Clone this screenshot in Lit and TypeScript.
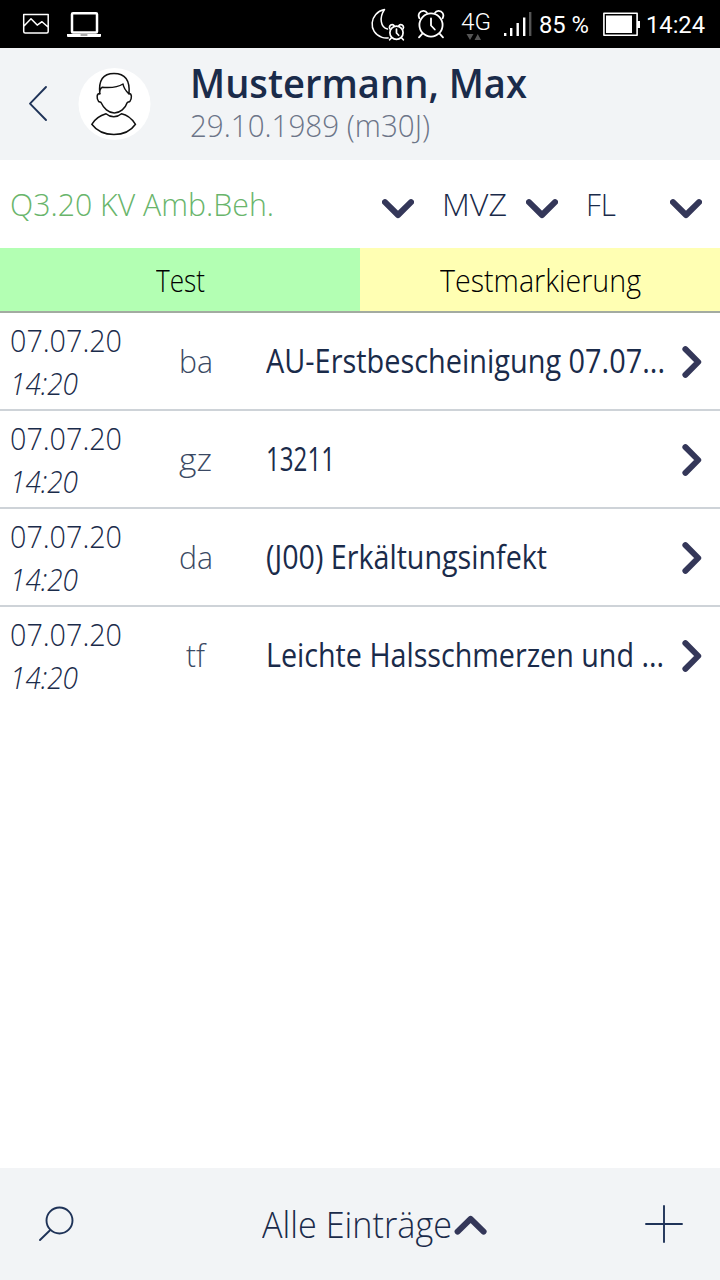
import { LitElement, html, css, svg } from "lit";
import { customElement, property } from "lit/decorators.js";

/** A single line of text condensed or widened to fill a given width. */
@customElement("fit-text")
class FitText extends LitElement {
  @property({ type: Number }) width = 0;
  static styles = css`
    :host { display: block; flex: none; white-space: pre; }
    .line { display: inline-block; transform-origin: 0 50%; }
  `;
  render() {
    return html`<span class="line"><slot></slot></span>`;
  }
  async firstUpdated() {
    this.style.width = `${this.width}px`;
    const line = this.renderRoot.querySelector(".line") as HTMLElement;
    const natural = line.getBoundingClientRect().width;
    if (natural) line.style.transform = `scaleX(${this.width / natural})`;
  }
}

interface Entry {
  date: string;
  time: string;
  kind: string;
  kindWidth: number;
  text: string;
  textWidth: number;
}

const entries: Entry[] = [
  { date: "07.07.20", time: "14:20", kind: "ba", kindWidth: 34, text: "AU-Erstbescheinigung 07.07...", textWidth: 399 },
  { date: "07.07.20", time: "14:20", kind: "gz", kindWidth: 33, text: "13211", textWidth: 69 },
  { date: "07.07.20", time: "14:20", kind: "da", kindWidth: 34, text: "(J00) Erkältungsinfekt", textWidth: 281 },
  { date: "07.07.20", time: "14:20", kind: "tf", kindWidth: 19, text: "Leichte Halsschmerzen und ...", textWidth: 398 },
];

const chevronDown = html`<svg class="chev" width="32" height="20" viewBox="0 0 32 20"><path d="M3 3.2 16 16 29 3.2" /></svg>`;
const chevronUp = html`<svg class="chev" width="34" height="20" viewBox="0 0 34 20"><path d="M3.6 16.6 16.6 3.8 29.6 16.6" /></svg>`;
const chevronRight = html`<svg class="chev" width="20" height="32" viewBox="0 0 20 32"><path d="M3.4 3.2 16.2 16 3.4 28.8" /></svg>`;

const clock = svg`
  <circle cx="14" cy="16" r="11.6" />
  <path d="M14 9.5v7l3.8 4M5.2 24.8 2 28.4M22.8 24.8 26 28.4" />
  <path d="M2.4 9.2C.4 5.8 2.8 1.6 6.6 1.8 8.2 1.9 9.4 2.6 10 3.8M25.6 9.2C27.6 5.8 25.2 1.6 21.4 1.8 19.8 1.9 18.6 2.6 18 3.8" />`;

@customElement("app-root")
class AppRoot extends LitElement {
  static styles = css`
    :host {
      display: flex; flex-direction: column; width: 720px; height: 1280px;
      box-sizing: border-box; overflow: hidden; background: #fff; color: #1a2b4a;
      font-family: "Open Sans", "Noto Sans", sans-serif; font-size: 32px; font-weight: 300; line-height: 43px;
    }
    svg { display: block; flex: none; fill: none; stroke-linecap: round; stroke-linejoin: round; }
    .chev { stroke: #343759; stroke-width: 6; }
    .status {
      flex: none; height: 48px; display: flex; align-items: center; background: #000; color: #fff;
      font-family: Roboto, sans-serif; font-size: 24.5px; font-weight: 400; line-height: 48px;
    }
    .status svg { stroke: #fff; }
    .picture { margin-left: 22px; }
    .laptop { margin-left: 17px; }
    .right { margin-left: auto; display: flex; align-items: center; width: 350px; }
    .alarm { margin-left: 11px; }
    .network { width: 30px; margin-left: 16px; display: flex; flex-direction: column; padding-top: 12px; height: 36px; }
    .network fit-text { font-size: 23px; line-height: 22px; font-weight: 350; }
    .signal { margin-left: 13px; }
    .percent { margin-left: 7px; padding-top: 1px; }
    .battery { margin-left: 14px; }
    .time { margin-left: 6px; padding-top: 1px; }
    .header { flex: none; height: 112px; display: flex; background: #f2f4f6; }
    .back { margin: 37px 0 0 27px; }
    .avatar { margin: 19px 0 0 29px; }
    .person { margin: 12px 0 0 38px; }
    .name { font-size: 40px; font-weight: 600; line-height: 45px; }
    .born { color: #6c7588; line-height: 40px; }
    .filters { flex: none; height: 88px; display: grid; grid-template-columns: 432px 144px 144px; align-items: center; }
    .filter { display: flex; align-items: center; justify-content: space-between; padding: 0 18px 1px 10px; }
    .filter .chev { margin-top: 10px; }
    .quarter { color: #69b56b; }
    .tabs { flex: none; height: 63px; display: grid; grid-template-columns: 1fr 1fr; border-bottom: 2px solid #a3aba1; color: #000; background: linear-gradient(90deg, #b3ffb3 50%, #ffffb3 50%); }
    .tab { display: flex; align-items: center; justify-content: center; }
    .list { flex: 1; }
    .entry { height: 96px; display: grid; grid-template-columns: 132px 129px 420px 39px; align-items: center; border-bottom: 2px solid #ced3d8; }
    .entry:last-child { border-bottom: none; }
    .entry .chev { margin-left: 1px; margin-top: 1px; }
    .when { padding-left: 10px; }
    .clock { font-style: italic; }
    .kind { display: flex; justify-content: center; color: #3a4963; padding: 0 2px 1px 0; }
    .text { padding: 0 0 2px 5px; font-size: 33px; font-weight: 500; }
    .footer { flex: none; height: 112px; display: flex; align-items: center; background: #f2f4f6; font-size: 36px; }
    .search { margin-left: 38px; }
    .all { display: flex; align-items: center; margin-left: 186px; }
    .all .chev { margin: 2px 0 0 2px; }
    .add { margin-left: auto; margin-right: 36px; }
    .thin { stroke: #1f3358; stroke-width: 1.9; }
  `;

  render() {
    return html`
      <div class="status">
        <svg class="picture" width="28" height="22" viewBox="0 0 28 22" stroke-width="1.5"><path d="M1.7 1.5h24.5v17q0 1.5-1.5 1.5H3.2q-1.5 0-1.5-1.5zM2 13l7-7.3 6.2 6.4 4.8-3.4L26 14" /></svg>
        <svg class="laptop" width="35" height="28" viewBox="0 0 35 28"><rect x="5" y="3.2" width="25" height="19.3" rx="1" stroke-width="2.5" /><path d="M0 24h34v2q0 1-1 1H1q-1 0-1-1z" fill="#fff" stroke="none" /><path d="M14 25h6" stroke="#555" stroke-width="1" /></svg>
        <div class="right">
          <svg width="36" height="34" viewBox="0 0 36 34" stroke-width="1.5"><path d="M14.5 2.5C-.5 5.5-2.5 25.5 12 30.4q3 1 6.2.5M14.5 2.5C9 10.5 10.5 20.5 17.5 22" /><g transform="translate(18.5 16.6) scale(.57)" stroke-width="3">${clock}</g></svg>
          <svg class="alarm" width="28" height="30" viewBox="0 0 28 30" stroke-width="1.8">${clock}</svg>
          <div class="network">
            <fit-text width="30">4G</fit-text>
            <svg width="20" height="7" viewBox="0 0 20 7"><path d="M5.5 0h7l-3.5 6zM13.5 6h6.5l-3.25-6z" fill="#555" stroke="none" /></svg>
          </div>
          <svg class="signal" width="28" height="26" viewBox="0 0 28 26"><path d="M0 22h2.4v3H0zM6 17h2.4v8H6zM12.5 12h2.4v13h-2.4zM19 6.5h2.4V25H19z" fill="#fff" stroke="none" /><path d="M25 1h2.4v24H25z" fill="#555" stroke="none" /></svg>
          <fit-text class="percent" width="50">85 %</fit-text>
          <svg class="battery" width="37" height="25" viewBox="0 0 37 25"><path d="M.9 1.2h33.2v22H.9z" stroke-width="1.6" /><path d="M3 3.5h26v17.5H3zM34 9h3v7h-3z" fill="#fff" stroke="none" /></svg>
          <fit-text class="time" width="59">14:24</fit-text>
        </div>
      </div>
      <div class="header">
        <svg class="back thin" width="22" height="38" viewBox="0 0 22 38"><path d="M19 2 3 18.7 19 35" /></svg>
        <svg class="avatar" width="74" height="74" viewBox="78 67 74 74">
          <circle cx="114.5" cy="104" r="36" fill="#fff" />
          <g stroke="#111" stroke-width="1.5">
            <path d="M99.8 94C98.4 80 103 73.5 114 73.5S130.2 80 129 94M99.8 94C99.5 91 100 88.5 102 87.3 110 88 117 88 123 84 123.5 88 127 92 129 94" />
            <path d="M99.8 93.5C96.5 93.5 96.5 98 98.5 101.2 99.4 102.5 101 101.5 101.3 103 103.5 108 108.5 113 114.3 113S125.5 108 127 103C127.5 101.5 129 102.5 130 101.2 132 98 132 93.5 129 93.5" />
            <path d="M106 113.8C98.5 116 95 119 91.8 124.3 102 138 126 138 135.5 124.3 132 119 128 115 121.5 113.8 117 117.8 110.5 117.8 106 113.8Z" />
          </g>
        </svg>
        <div class="person">
          <fit-text class="name" width="337">Mustermann, Max</fit-text>
          <fit-text class="born" width="240">29.10.1989 (m30J)</fit-text>
        </div>
      </div>
      <div class="filters">
        <div class="filter"><fit-text class="quarter" width="264">Q3.20 KV Amb.Beh.</fit-text>${chevronDown}</div>
        <div class="filter"><fit-text width="65">MVZ</fit-text>${chevronDown}</div>
        <div class="filter"><fit-text width="30">FL</fit-text>${chevronDown}</div>
      </div>
      <div class="tabs">
        <div class="tab"><fit-text width="49">Test</fit-text></div>
        <div class="tab"><fit-text width="201">Testmarkierung</fit-text></div>
      </div>
      <div class="list">
        ${entries.map(
          (e) => html`<div class="entry">
            <div class="when">
              <fit-text width="112">${e.date}</fit-text>
              <fit-text class="clock" width="68">${e.time}</fit-text>
            </div>
            <div class="kind"><fit-text width=${e.kindWidth}>${e.kind}</fit-text></div>
            <div class="text"><fit-text width=${e.textWidth}>${e.text}</fit-text></div>
            ${chevronRight}
          </div>`
        )}
      </div>
      <div class="footer">
        <svg class="search thin" width="38" height="38" viewBox="0 0 38 38"><circle cx="21.5" cy="15.5" r="13" /><path d="M12.3 25 2 35" /></svg>
        <div class="all"><fit-text width="190">Alle Einträge</fit-text>${chevronUp}</div>
        <svg class="add thin" width="40" height="40" viewBox="0 0 40 40"><path d="M2 20h36M20 2v36" /></svg>
      </div>
    `;
  }
}
